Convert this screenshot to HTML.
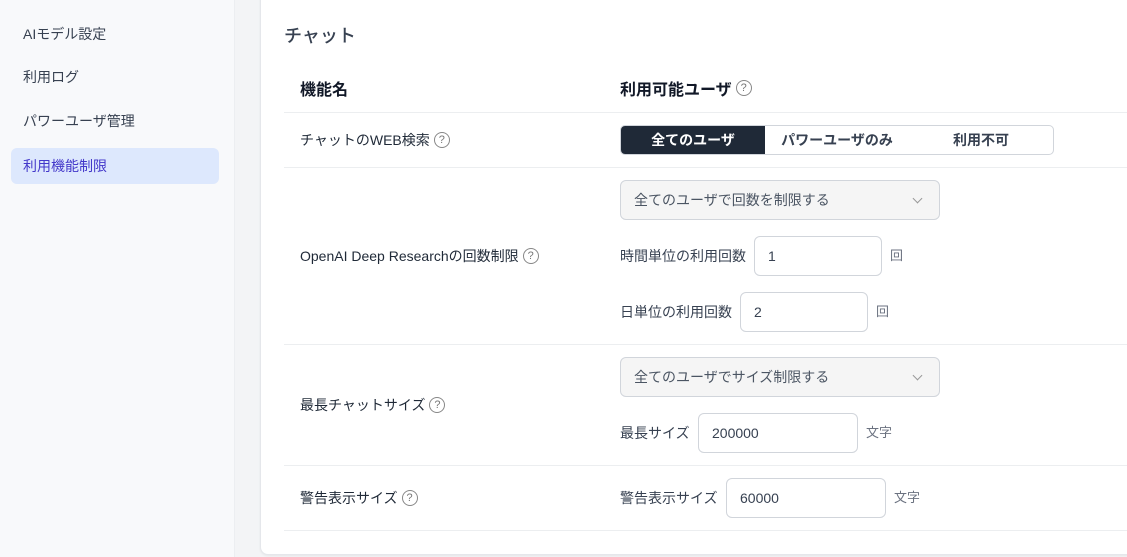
<!DOCTYPE html>
<html><head><meta charset="utf-8"><style>
*{box-sizing:border-box;margin:0;padding:0}
body{width:1127px;height:557px;overflow:hidden;background:#f3f4f6;font-family:"Liberation Sans","Noto Sans CJK JP",sans-serif;color:#1f2937;position:relative;font-size:14px}
.a{position:absolute;white-space:nowrap}
.f{display:flex;align-items:center}
.side{position:absolute;left:0;top:0;width:235px;height:557px;background:#f8f9fb;border-right:1px solid #eceef1}
.nav{position:absolute;left:11px;width:208px;height:36px;line-height:36px;padding-left:12px;font-size:14px;color:#374151;border-radius:6px}
.card{position:absolute;left:260px;top:-10px;width:880px;height:565px;background:#fff;border:1px solid #e5e7eb;border-radius:8px;box-shadow:0 1px 2px rgba(0,0,0,.06)}
.line{position:absolute;left:284px;right:0;height:1px;background:#eceef0}
.q{display:flex;align-items:center;justify-content:center;width:16px;height:16px;border:1.4px solid #888;border-radius:50%;font-size:11px;color:#777;margin-left:4px;font-weight:normal}
.sel{position:absolute;left:620px;width:320px;height:40px;border:1px solid #d1d5db;border-radius:6px;background:#f5f5f5;padding-left:13px;line-height:38px;color:#4b5563}
.sel:after{content:"";position:absolute;right:18px;top:14px;width:6px;height:6px;border-right:1.2px solid #999;border-bottom:1.2px solid #999;transform:rotate(45deg)}
.inp{position:absolute;height:40px;border:1px solid #d1d5db;border-radius:6px;background:#fff;padding-left:13px;line-height:38px;color:#374151}
.lab{position:absolute;color:#374151;line-height:40px}
.unit{position:absolute;color:#6b7280;line-height:40px;font-size:13px}
</style></head><body>
<div class="side">
<div class="nav" style="top:16px">AIモデル設定</div>
<div class="nav" style="top:59px">利用ログ</div>
<div class="nav" style="top:103px">パワーユーザ管理</div>
<div class="nav" style="top:148px;background:#dde8fd;color:#4338ca">利用機能制限</div>
</div>
<div class="card"></div>
<div class="a" style="left:284px;top:22px;font-size:18px;font-weight:500;color:#374151">チャット</div>
<div class="a f" style="left:300px;top:78px;height:20px;font-size:16px;font-weight:bold;color:#111827">機能名</div>
<div class="a f" style="left:620px;top:78px;height:20px;font-size:16px;font-weight:bold;color:#111827">利用可能ユーザ<span class="q">?</span></div>
<div class="line" style="top:112px"></div>
<div class="a f" style="left:300px;top:130px;height:20px;color:#1f2937">チャットのWEB検索<span class="q">?</span></div>
<div class="a" style="left:620px;top:125px;width:434px;height:30px;border:1px solid #d1d5db;border-radius:5px;overflow:hidden;font-weight:bold;font-size:14px">
<div class="a" style="left:0;top:0;width:144px;height:28px;background:#1f2937;color:#fff;text-align:center;line-height:28px">全てのユーザ</div>
<div class="a" style="left:144px;top:0;width:144px;height:28px;color:#374151;text-align:center;line-height:28px">パワーユーザのみ</div>
<div class="a" style="left:288px;top:0;width:144px;height:28px;color:#374151;text-align:center;line-height:28px">利用不可</div>
</div>
<div class="line" style="top:167px"></div>
<div class="a f" style="left:300px;top:246px;height:20px">OpenAI Deep Researchの回数制限<span class="q">?</span></div>
<div class="sel" style="top:180px">全てのユーザで回数を制限する</div>
<div class="lab" style="left:620px;top:236px">時間単位の利用回数</div>
<div class="inp" style="left:754px;top:236px;width:128px">1</div>
<div class="unit" style="left:890px;top:236px">回</div>
<div class="lab" style="left:620px;top:292px">日単位の利用回数</div>
<div class="inp" style="left:740px;top:292px;width:128px">2</div>
<div class="unit" style="left:876px;top:292px">回</div>
<div class="line" style="top:344px"></div>
<div class="a f" style="left:300px;top:395px;height:20px">最長チャットサイズ<span class="q">?</span></div>
<div class="sel" style="top:357px">全てのユーザでサイズ制限する</div>
<div class="lab" style="left:620px;top:413px">最長サイズ</div>
<div class="inp" style="left:698px;top:413px;width:160px">200000</div>
<div class="unit" style="left:866px;top:413px">文字</div>
<div class="line" style="top:465px"></div>
<div class="a f" style="left:300px;top:488px;height:20px">警告表示サイズ<span class="q">?</span></div>
<div class="lab" style="left:620px;top:478px">警告表示サイズ</div>
<div class="inp" style="left:726px;top:478px;width:160px">60000</div>
<div class="unit" style="left:894px;top:478px">文字</div>
<div class="line" style="top:530px"></div>
</body></html>
